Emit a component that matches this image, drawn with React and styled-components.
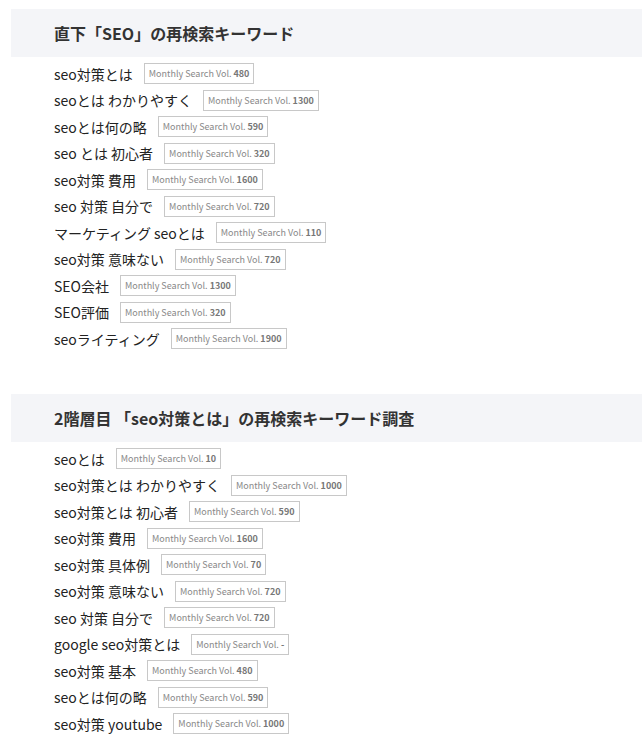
import React from 'react';
import styled, { createGlobalStyle } from 'styled-components';

const GlobalStyle = createGlobalStyle`
  body {
    margin: 0;
    background: #fff;
    font-family: 'Noto Sans CJK JP', 'Noto Sans', sans-serif;
    color: #333;
  }
`;

const Page = styled.div`
  padding: 9px 0 0 11px;
`;

const Section = styled.section`
  margin-bottom: 42px;
`;

const Heading = styled.h2`
  margin: 0 0 4px;
  height: 47.5px;
  display: flex;
  align-items: center;
  padding-left: 43px;
  background: #f4f5f8;
  font-size: 16px;
  font-weight: 700;
  color: #333;
`;

const List = styled.ul`
  list-style: none;
  margin: 0;
  padding: 0 0 0 43px;
`;

const Row = styled.li`
  height: 26.5px;
  display: flex;
  align-items: center;
  font-size: 14px;
  color: #222;
`;

const Volume = styled.span`
  margin-left: 11px;
  padding: 0 4px;
  height: 19px;
  display: inline-flex;
  align-items: center;
  border: 1px solid #c8c8c8;
  font-size: 9px;
  color: #888;
  white-space: pre;
  b {
    font-weight: 700;
    color: #777;
  }
`;

const sections = [
  {
    title: '直下「SEO」の再検索キーワード',
    rows: [
      ['seo対策とは', '480'],
      ['seoとは わかりやすく', '1300'],
      ['seoとは何の略', '590'],
      ['seo とは 初心者', '320'],
      ['seo対策 費用', '1600'],
      ['seo 対策 自分で', '720'],
      ['マーケティング seoとは', '110'],
      ['seo対策 意味ない', '720'],
      ['SEO会社', '1300'],
      ['SEO評価', '320'],
      ['seoライティング', '1900'],
    ],
  },
  {
    title: '2階層目 「seo対策とは」の再検索キーワード調査',
    rows: [
      ['seoとは', '10'],
      ['seo対策とは わかりやすく', '1000'],
      ['seo対策とは 初心者', '590'],
      ['seo対策 費用', '1600'],
      ['seo対策 具体例', '70'],
      ['seo対策 意味ない', '720'],
      ['seo 対策 自分で', '720'],
      ['google seo対策とは', '-'],
      ['seo対策 基本', '480'],
      ['seoとは何の略', '590'],
      ['seo対策 youtube', '1000'],
    ],
  },
];

const App = () => {
  return (
    <Page>
      <GlobalStyle />
      {sections.map(section => (
        <Section key={section.title}>
          <Heading>{section.title}</Heading>
          <List>
            {section.rows.map(([word, vol], i) => (
              <Row key={i}>
                {word}
                <Volume>
                  Monthly Search Vol. <b>{vol}</b>
                </Volume>
              </Row>
            ))}
          </List>
        </Section>
      ))}
    </Page>
  );
};

export default App;
